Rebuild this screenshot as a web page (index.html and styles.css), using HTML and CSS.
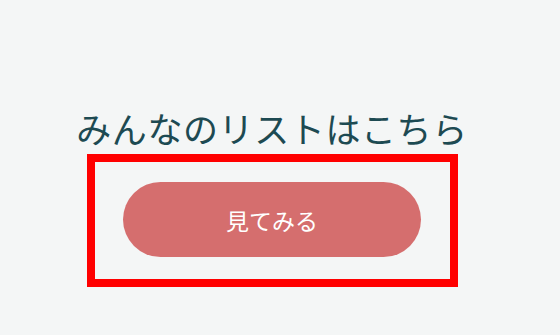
FILE: index.html
```html
<!DOCTYPE html>
<html lang="ja">
<head>
<meta charset="utf-8">
<link rel="stylesheet" href="styles.css">
</head>
<body>
<main class="page">
  <h2 class="title">みんなのリストはこちら</h2>
  <div class="frame">
    <a class="btn" href="#">見てみる</a>
  </div>
</main>
</body>
</html>
```
FILE: styles.css
```css
html, body {
  margin: 0;
  padding: 0;
  background: #f4f6f6;
}
.page {
  width: 544px;
  height: 335px;
  display: flex;
  flex-direction: column;
  align-items: center;
  font-family: "Noto Sans CJK JP", "Noto Sans", sans-serif;
}
.title {
  margin: 107px 0 0;
  font-size: 35px;
  line-height: 42px;
  font-weight: 400;
  color: #1d4a52;
  letter-spacing: 0.6px;
}
.frame {
  margin-top: 5px;
  width: 355px;
  height: 117px;
  border: 8px solid #ff0000;
  display: flex;
  justify-content: center;
  align-items: flex-start;
}
.btn {
  margin-top: 20px;
  width: 298px;
  height: 75px;
  border-radius: 38px;
  background: #d56e6e;
  color: #ffffff;
  font-size: 23px;
  text-decoration: none;
  display: flex;
  align-items: center;
  justify-content: center;
}
```
